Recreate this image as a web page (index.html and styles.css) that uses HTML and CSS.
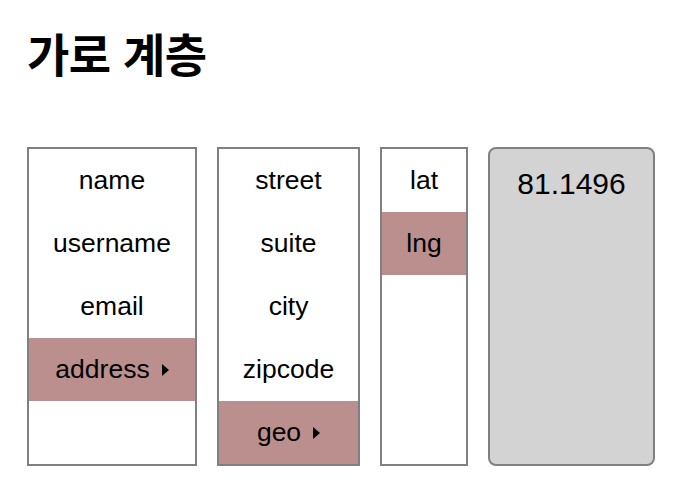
FILE: index.html
```html
<!DOCTYPE html>
<html lang="ko">
<head>
    <meta charset="UTF-8">
    <title>가로 계층</title>
    <link rel="stylesheet" href="styles.css">
</head>
<body>
    <h1 class="title">가로 계층</h1>
    <div class="columns">
        <ul class="column col-user">
            <li class="item">name</li>
            <li class="item">username</li>
            <li class="item">email</li>
            <li class="item selected">address<span class="arrow"></span></li>
        </ul>
        <ul class="column col-address">
            <li class="item">street</li>
            <li class="item">suite</li>
            <li class="item">city</li>
            <li class="item">zipcode</li>
            <li class="item selected">geo<span class="arrow"></span></li>
        </ul>
        <ul class="column col-geo">
            <li class="item">lat</li>
            <li class="item selected">lng</li>
        </ul>
        <div class="value-box">81.1496</div>
    </div>
</body>
</html>
```

FILE: styles.css
```css
body {
    margin: 0;
    padding: 0 27px;
    background-color: #fff;
    color: #000;
    font-family: 'Liberation Sans', Arial, sans-serif;
}

.title {
    margin: 0;
    padding-top: 24px;
    height: 120px;
    box-sizing: border-box;
    font-family: 'Noto Sans CJK KR', sans-serif;
    font-size: 46px;
    font-weight: bold;
    line-height: 56px;
    letter-spacing: -0.5px;
}

.columns {
    display: flex;
    align-items: stretch;
    gap: 20px;
    margin-top: 27px;
}

.column {
    list-style: none;
    margin: 0;
    padding: 0;
    border: 2px solid #808080;
    box-sizing: border-box;
}

.col-user {
    width: 170px;
}

.col-address {
    width: 143px;
}

.col-geo {
    width: 88px;
}

.item {
    padding: 17px 0;
    font-size: 26.5px;
    line-height: 29px;
    text-align: center;
}

.item.selected {
    background-color: #bc8f8f;
}

.arrow {
    display: inline-block;
    width: 0;
    height: 0;
    margin-left: 12px;
    vertical-align: 2px;
    border-left: 7px solid #000;
    border-top: 6px solid transparent;
    border-bottom: 6px solid transparent;
}

.value-box {
    width: 167px;
    box-sizing: border-box;
    padding-top: 18px;
    background-color: #d3d3d3;
    border: 2px solid #808080;
    border-radius: 8px;
    font-size: 30px;
    text-align: center;
}
```
